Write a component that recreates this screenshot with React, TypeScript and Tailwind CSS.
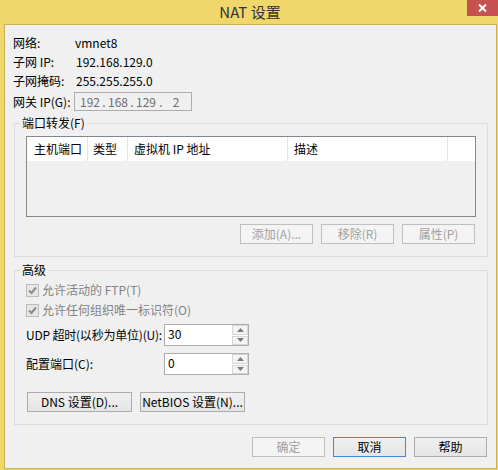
import React from 'react';

const font = { fontFamily: '"Noto Sans CJK SC", "Noto Sans", sans-serif' };

function Btn({ label, disabled, focused, w = 'w-[73px]' }: { label: string; disabled?: boolean; focused?: boolean; w?: string }) {
  const cls = disabled
    ? 'border-[#bfbfbf] bg-[#f4f4f4] text-[#a0a0a0]'
    : focused
      ? 'border-[#3c8ad8] bg-gradient-to-b from-[#f0f0f0] to-[#e5e5e5] text-black'
      : 'border-[#acacac] bg-gradient-to-b from-[#f0f0f0] to-[#e5e5e5] text-black';
  return (
    <div className={`${w} h-[20px] border ${cls} flex items-center justify-center text-[12px] leading-[14px] whitespace-nowrap`}>
      {label}
    </div>
  );
}

function Check({ label }: { label: string }) {
  return (
    <div className="h-[20px] flex items-center">
      <div className="w-[13px] h-[13px] border border-[#bcbcbc] bg-[#e6e6e6] flex items-center justify-center">
        <svg width="11" height="11" viewBox="0 0 11 11">
          <path d="M2 5.5 L4.5 8 L9 2.5" fill="none" stroke="#8c8c8c" strokeWidth="2" />
        </svg>
      </div>
      <span className="ml-[3px] text-[12px] leading-[14px] text-[#838383] whitespace-nowrap">{label}</span>
    </div>
  );
}

function Spin({ value }: { value: string }) {
  return (
    <div className="w-[85px] h-[22px] border border-[#abadb3] bg-white flex">
      <div className="flex-1 pl-[3px] pt-[2px] text-[12px] leading-[14px] text-black">{value}</div>
      <div className="w-[16px] flex flex-col gap-[1px]">
        <div className="h-[10px] border border-[#d6d6d6] bg-[#f4f4f4] flex items-center justify-center">
          <svg width="7" height="4" viewBox="0 0 7 4"><path d="M0 4 L3.5 0 L7 4 Z" fill="#7a7a7a" /></svg>
        </div>
        <div className="h-[10px] border border-[#d6d6d6] bg-[#f4f4f4] flex items-center justify-center">
          <svg width="7" height="4" viewBox="0 0 7 4"><path d="M0 0 L3.5 4 L7 0 Z" fill="#7a7a7a" /></svg>
        </div>
      </div>
    </div>
  );
}

const info = [
  ['网络:', 'vmnet8'],
  ['子网 IP:', '192.168.129.0'],
  ['子网掩码:', '255.255.255.0'],
];

const cols = [
  { t: '主机端口', w: 'w-[61px] pl-[7px]' },
  { t: '类型', w: 'w-[40px] pl-[5px]' },
  { t: '虚拟机 IP 地址', w: 'w-[160px] pl-[6px]' },
  { t: '描述', w: 'w-[160px] pl-[6px]' },
];

export default function App() {
  return (
    <div className="w-[498px] h-[470px] bg-[#f0d76b] flex flex-col text-black" style={font}>
      {/* title bar */}
      <div className="relative h-[24px] flex items-center justify-center">
        <span className="text-[15px] leading-[18px] text-[#333333] ml-[2px]">NAT 设置</span>
        <div className="absolute top-0 right-0 w-[31px] h-[16px] bg-[#c75050] flex items-center justify-center">
          <svg width="9" height="8" viewBox="0 0 9 8">
            <path d="M1 0.5 L8 7.5 M8 0.5 L1 7.5" stroke="#ffffff" strokeWidth="2" />
          </svg>
        </div>
      </div>

      {/* client */}
      <div className="ml-[4px] w-[493px] h-[445px] border border-[#c6b158] bg-[#f0f0f0] pl-[9px] pr-[8px] pt-[8px]">
        <div>
          {info.map(([k, v]) => (
            <div key={k} className="h-[19px] flex items-center text-[12px] leading-[14px]">
              <span className="w-[61px] -ml-[1px]">{k}</span>
              <span className={k === '网络:' ? 'ml-[1px]' : 'ml-[2px]'}>{v}</span>
            </div>
          ))}
          <div className="mt-[2px] h-[19px] flex items-center text-[12px] leading-[14px]">
            <span className="w-[61px] -ml-[1px] whitespace-nowrap">网关 IP(G):</span>
            <div className="w-[118px] h-[19px] border border-[#adadad] bg-[#f0f0f0] flex items-center pl-[4px] text-[#6d6d6d]">
              <span className="w-[22px] text-center">192</span>
              <span className="w-[6px] text-center">.</span>
              <span className="w-[22px] text-center">168</span>
              <span className="w-[6px] text-center">.</span>
              <span className="w-[22px] text-center">129</span>
              <span className="w-[8px] text-center">.</span>
              <span className="w-[22px] text-center">2</span>
            </div>
          </div>
        </div>

        {/* port forwarding */}
        <fieldset className="mt-[5px] border border-[#dcdcdc]">
          <legend className="ml-[5px] px-[2px] text-[12px] leading-[14px]">端口转发(F)</legend>
          <div className="px-[11px] pb-[12px]">
            <div className="mt-[6px] h-[81px] border border-[#828790] bg-[#f0f0f0]">
              <div className="h-[24px] bg-white flex text-[12px] leading-[14px]">
                {cols.map(c => (
                  <div key={c.t} className={`${c.w} h-full flex items-center border-r border-[#e5e5e5] whitespace-nowrap`}>
                    {c.t}
                  </div>
                ))}
                <div className="flex-1" />
              </div>
            </div>
            <div className="mt-[7px] mr-[1px] flex justify-end gap-[8px]">
              <Btn label="添加(A)..." disabled />
              <Btn label="移除(R)" disabled />
              <Btn label="属性(P)" disabled />
            </div>
          </div>
        </fieldset>

        {/* advanced */}
        <fieldset className="mt-[6px] border border-[#dcdcdc]">
          <legend className="ml-[5px] px-[2px] text-[12px] leading-[14px]">高级</legend>
          <div className="px-[11px] pb-[12px]">
            <div className="mt-[3px]">
              <Check label="允许活动的 FTP(T)" />
              <Check label="允许任何组织唯一标识符(O)" />
            </div>
            <div className="mt-[4px] flex items-center">
              <span className="w-[138px] text-[12px] leading-[14px] whitespace-nowrap tracking-[-0.2px]">UDP 超时(以秒为单位)(U):</span>
              <Spin value="30" />
            </div>
            <div className="mt-[7px] flex items-center">
              <span className="w-[138px] text-[12px] leading-[14px] whitespace-nowrap">配置端口(C):</span>
              <Spin value="0" />
            </div>
            <div className="mt-[17px] ml-[1px] flex gap-[8px]">
              <Btn label="DNS 设置(D)..." w="w-[105px]" />
              <Btn label="NetBIOS 设置(N)..." w="w-[105px]" />
            </div>
          </div>
        </fieldset>

        <div className="mt-[12px] mr-[1px] flex justify-end gap-[8px]">
          <Btn label="确定" disabled />
          <Btn label="取消" focused />
          <Btn label="帮助" />
        </div>
      </div>
    </div>
  );
}
